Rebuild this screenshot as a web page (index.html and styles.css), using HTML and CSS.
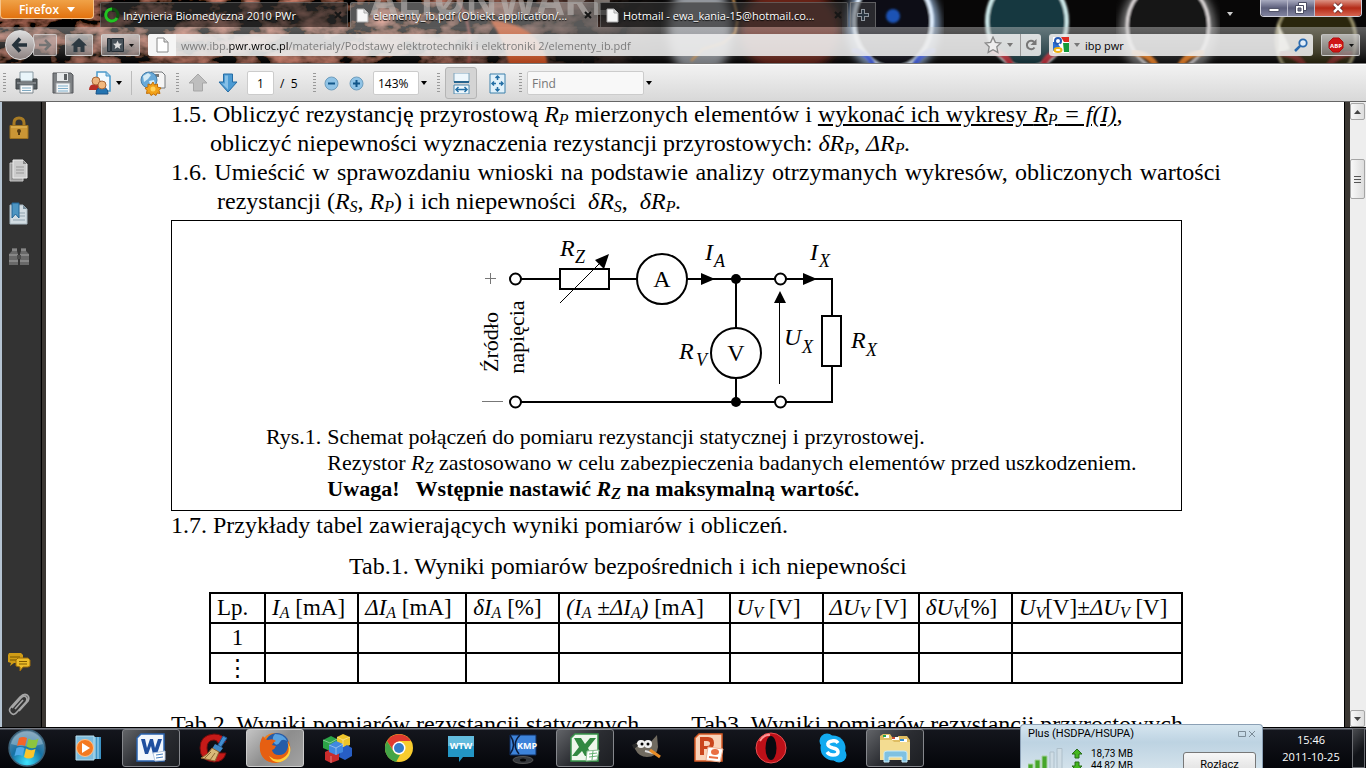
FILE: index.html
```html
<!DOCTYPE html>
<html lang="pl">
<head>
    <meta charset="UTF-8">
    <meta name="viewport" content="width=device-width, initial-scale=1.0">
    <title>elementy_ib.pdf (Obiekt application/pdf)</title>
    <link rel="stylesheet" href="styles.css">
</head>
<body>
    <header class="browser">
        <!-- Persona theme behind the tabs -->
        <svg class="theme" viewBox="0 0 1366 64" preserveAspectRatio="xMinYMin slice" aria-hidden="true">
            <defs>
                <filter id="rust" x="0" y="0" width="100%" height="100%">
                    <feTurbulence type="fractalNoise" baseFrequency="0.035 0.06" numOctaves="4" seed="8"/>
                    <feColorMatrix values="2 0 0 0 -0.85  0.7 0 0 0 -0.3  0.5 0 0 0 -0.22  0 0 0 0 1"/>
                </filter>
                <filter id="soft"><feGaussianBlur stdDeviation="5"/></filter>
                <filter id="glow"><feGaussianBlur stdDeviation="1.2"/></filter>
                <linearGradient id="rustFade"><stop offset="0.6" stop-color="#fff"/><stop offset="1" stop-color="#000"/></linearGradient>
                <mask id="rustMask"><rect width="660" height="64" fill="url(#rustFade)"/></mask>
            </defs>
            <rect width="1366" height="64" fill="#080707"/>
            <rect width="660" height="64" filter="url(#rust)" mask="url(#rustMask)"/>
            <path d="M455 -5q22 35 12 75" fill="none" stroke="#b9524c" stroke-width="2" filter="url(#glow)"/>
            <path d="M490 20q55 5 58 50h-38q-5-30-20-50z" fill="#d65324" filter="url(#glow)"/>
            <ellipse cx="700" cy="30" rx="32" ry="50" fill="#92969c" filter="url(#soft)"/>
            <ellipse cx="790" cy="30" rx="50" ry="45" fill="#682415" filter="url(#soft)"/>
            <path d="M733-2l5 20-3 15-12 10-20 6-12 12" fill="none" stroke="#e7a75b" stroke-width="2" filter="url(#glow)"/>
            <ellipse cx="893" cy="25" rx="42" ry="48" fill="#0a1326" stroke="#a9c8ee" stroke-width="7" filter="url(#soft)"/>
            <ellipse cx="893" cy="22" rx="39" ry="46" fill="#080b17" stroke="#e2f0ff" stroke-width="4" filter="url(#glow)"/>
            <circle cx="893" cy="16" r="7" fill="#1c53b5" filter="url(#glow)"/>
            <path d="M852 50q20 4 22 20M935 50q-18 4-22 20" fill="none" stroke="#4a68ef" stroke-width="5" filter="url(#glow)"/>
            <ellipse cx="1027" cy="22" rx="40" ry="46" fill="#123841" stroke="#d1edee" stroke-width="4" filter="url(#glow)"/>
            <path d="M990 50q20 4 22 20M1064 50q-20 4-22 20" fill="none" stroke="#c62f3b" stroke-width="6" filter="url(#glow)"/>
            <ellipse cx="1168" cy="30" rx="43" ry="48" fill="#14141b" stroke="#888" stroke-width="8" filter="url(#soft)"/>
            <ellipse cx="1168" cy="26" rx="41" ry="45" fill="#151519" stroke="#e1dcdc" stroke-width="3" filter="url(#glow)"/>
            <path d="M1132 52q20 2 26 18M1204 52q-20 2-26 18" fill="none" stroke="#f18327" stroke-width="6" filter="url(#glow)"/>
            <ellipse cx="1316" cy="40" rx="40" ry="44" fill="#2b280c" stroke="#9c946e" stroke-width="3" filter="url(#glow)"/>
            <path d="M1278 24q8 14 12 25l-12 5z" fill="#ede8cc" filter="url(#glow)"/>
            <path d="M1280 53q22 2 26 18M1352 53q-20 2-26 18" fill="none" stroke="#7f2b26" stroke-width="6" filter="url(#glow)"/>
            <text class="theme-logo" x="370" y="15">ALIØNWARE</text>
        </svg>

        <div class="tab-bar">
            <button class="firefox-button">Firefox
                <svg width="8" height="5" viewBox="0 0 8 5"><path d="M0 0h8L4 5z" fill="#fff"/></svg>
            </button>
            <div class="tabs">
                <div class="tab">
                    <svg width="16" height="16" viewBox="0 0 16 16"><circle cx="8" cy="8" r="6" fill="none" stroke="#114f11" stroke-width="3"/><path d="M8 2a6 6 0 1 0 5 9" fill="none" stroke="#22c522" stroke-width="3"/></svg>
                    <span class="tab-title">Inżynieria Biomedyczna 2010 PWr</span>
                    <button class="tab-close" aria-label="Zamknij kartę"><svg width="8" height="8" viewBox="0 0 8 8"><path d="M1 1l6 6M7 1L1 7"/></svg></button>
                </div>
                <div class="tab tab-active">
                    <svg width="16" height="16" viewBox="0 0 16 16"><path d="M3 2h7l4 4v9H3z" fill="#f6f6f6" stroke="#a9a9a9"/><path d="M10 2v4h4" fill="#ddd" stroke="#a9a9a9"/></svg>
                    <span class="tab-title">elementy_ib.pdf (Obiekt application/...</span>
                    <button class="tab-close" aria-label="Zamknij kartę"><svg width="8" height="8" viewBox="0 0 8 8"><path d="M1 1l6 6M7 1L1 7"/></svg></button>
                </div>
                <div class="tab">
                    <svg width="16" height="16" viewBox="0 0 16 16"><path d="M3 2h7l4 4v9H3z" fill="#f6f6f6" stroke="#a9a9a9"/><path d="M10 2v4h4" fill="#ddd" stroke="#a9a9a9"/></svg>
                    <span class="tab-title">Hotmail - ewa_kania-15@hotmail.co...</span>
                    <button class="tab-close" aria-label="Zamknij kartę"><svg width="8" height="8" viewBox="0 0 8 8"><path d="M1 1l6 6M7 1L1 7"/></svg></button>
                </div>
                <button class="new-tab" aria-label="Nowa karta"><svg width="12" height="12" viewBox="0 0 12 12"><path d="M6 0v12M0 6h12" stroke="#8e959d" stroke-width="4"/><path d="M6 1v10M1 6h10" stroke="#2b3641" stroke-width="2"/></svg></button>
            </div>
            <button class="tab-list" aria-label="Lista kart"><svg width="6" height="4" viewBox="0 0 6 4"><path d="M0 0h6L3 4z" fill="#ccc"/></svg></button>
            <div class="window-buttons">
                <button class="win-button" aria-label="Minimalizuj"><svg width="12" height="12" viewBox="0 0 12 12"><path d="M1 6.500h10v3H1z" fill="#fff" stroke="#54566b"/></svg></button>
                <button class="win-button" aria-label="Przywróć"><svg width="12" height="12" viewBox="0 0 12 12"><path d="M3.500 .5h8v8h-8z" fill="#fff" stroke="#4b4d63"/><path d="M.5 3.500h8v8h-8z" fill="#fff" stroke="#4b4d63"/><path d="M3 6h3v3H3z" fill="#75768b" stroke="#4b4d63"/></svg></button>
                <button class="win-button win-close" aria-label="Zamknij"><svg width="12" height="12" viewBox="0 0 12 12"><path d="M2 2l8 8M10 2l-8 8" stroke="#5b2020" stroke-width="4"/><path d="M2 2l8 8M10 2l-8 8" stroke="#fff" stroke-width="2.500"/></svg></button>
            </div>
        </div>

        <div class="nav-bar">
            <div class="history">
                <button class="back" aria-label="Wstecz"><svg width="18" height="18" viewBox="0 0 18 18"><path d="M9 2.500L3 9l6 6.500M3.500 9H16" fill="none" stroke="#26323b" stroke-width="3.500"/></svg></button>
                <button class="nav-button forward" aria-label="Dalej"><svg width="14" height="14" viewBox="0 0 14 14"><path d="M7 2l5 5-5 5M12 7H1" fill="none" stroke="#747474" stroke-width="2.500"/></svg></button>
            </div>
            <button class="nav-button home" aria-label="Strona startowa"><svg width="16" height="14" viewBox="0 0 16 14"><path d="M8 0l8 7.500h-2.500V14h-4V9h-3v5h-4V7.500H0z" fill="#2d3941"/></svg></button>
            <button class="nav-button bookmarks" aria-label="Zakładki">
                <svg width="17" height="14" viewBox="0 0 17 14"><path d="M.5 .5h3v13h-3zM4.500 .5h12v13h-12z" fill="#475159" stroke="#252e35"/><path d="M10.500 2.500l1.300 3 3.200.3-2.400 2.100.7 3.100-2.800-1.700L7.700 11l.7-3.100L6 5.800l3.200-.3z" fill="#ddd"/></svg>
                <svg width="5" height="3" viewBox="0 0 5 3"><path d="M0 0h5L2.500 3z" fill="#111"/></svg>
            </button>
            <div class="url-bar">
                <span class="identity"><svg width="13" height="16" viewBox="0 0 13 16"><path d="M1 1h7l4 4v10H1z" fill="#fff" stroke="#888"/><path d="M8 1v4h4" fill="#ddd" stroke="#888"/></svg></span>
                <input class="url-input" type="text" aria-label="Adres" value="www.ibp.pwr.wroc.pl/materialy/Podstawy elektrotechniki i elektroniki 2/elementy_ib.pdf">
                <svg width="18" height="18" viewBox="0 0 16 16"><path d="M8 1l2.100 4.600 4.900.6-3.600 3.400.9 5L8 12.200l-4.300 2.400.9-5L1 6.200l4.900-.6z" fill="#eee" stroke="#8a8a8a" stroke-width="1.200"/></svg>
                <svg class="url-arrow" width="6" height="4" viewBox="0 0 6 4"><path d="M0 0h6L3 4z" fill="#777"/></svg>
                <button class="reload" aria-label="Odśwież"><svg width="12" height="12" viewBox="0 0 12 12"><path d="M9.500 8.500A4.200 4.200 0 1 1 9 3" fill="none" stroke="#777" stroke-width="2"/><path d="M11.500 0v6h-6z" fill="#777"/></svg></button>
            </div>
            <div class="search-bar">
                <svg width="16" height="16" viewBox="0 0 16 16"><path d="M0 0h16v16H0z" fill="#fff"/><path d="M8 0h8v5h-5z" fill="#dd2c22"/><path d="M10 6h6v9h-5z" fill="#149a3a"/><path d="M0 5h5l3 4-8 5z" fill="#2c6fd4"/><circle cx="5" cy="4" r="3" fill="#fff" stroke="#2459b5" stroke-width="2"/><ellipse cx="5" cy="13" rx="3.500" ry="2" fill="#fff" stroke="#f1b213" stroke-width="2"/><path d="M6 7l3 3" stroke="#fff" stroke-width="2"/></svg>
                <svg width="6" height="4" viewBox="0 0 6 4"><path d="M0 0h6L3 4z" fill="#777"/></svg>
                <input class="search-input" type="text" aria-label="Szukaj" value="ibp pwr">
                <svg width="14" height="14" viewBox="0 0 14 14"><circle cx="9" cy="5" r="3.700" fill="#e2edf8" stroke="#2a6aae" stroke-width="1.800"/><path d="M6.200 7.800L1 13" stroke="#2a6aae" stroke-width="2.500"/></svg>
            </div>
            <button class="nav-button abp" aria-label="Adblock Plus">
                <svg width="16" height="16" viewBox="0 0 16 16"><path d="M5 1h6l4 4v6l-4 4H5l-4-4V5z" fill="#cf1616" stroke="#b30d0d"/><text class="abp-text" x="8" y="11">ABP</text></svg>
                <svg width="5" height="3" viewBox="0 0 5 3"><path d="M0 0h5L2.500 3z" fill="#111"/></svg>
            </button>
        </div>
    </header>

    <div class="pdf-toolbar">
        <span class="grip"></span>
        <button class="tool print" aria-label="Drukuj"><svg width="23" height="24" viewBox="0 0 23 24"><path d="M5 1h13v9H5z" fill="#e9f5fa" stroke="#8a9aa3"/><path d="M1 8h4v3h13V8h4v10H1z" fill="#555b5f" stroke="#3f4447"/><path d="M2 12h19" stroke="#a8adb0"/><path d="M5 14h13v8H5z" fill="#f8fafb" stroke="#7c868c"/><path d="M7 17h9M7 19.500h9" stroke="#7ea9c1"/></svg></button>
        <button class="tool save" aria-label="Zapisz"><svg width="22" height="22" viewBox="0 0 22 22"><path d="M1 1h18l2 2v18H1z" fill="#7d8083" stroke="#54575a"/><path d="M5 1h11v8H5z" fill="#e6e8e9"/><path d="M12 2h3v6h-3z" fill="#5a5d60"/><path d="M4 11h14v10H4z" fill="#f2f5f7" stroke="#9a9da0"/><path d="M6 14h10M6 16.500h10M6 19h10" stroke="#80afca"/></svg></button>
        <button class="tool share" aria-label="Współpraca">
            <svg width="24" height="24" viewBox="0 0 24 24"><path d="M9 1h9l4 4v15H9z" fill="#f2f9fd" stroke="#4a98c9" stroke-width="1.500"/><path d="M18 1v4h4" fill="#9ccbe8" stroke="#4a98c9"/><path d="M1 19q0-6 6-6t6 6z" fill="#b72f25"/><circle cx="8" cy="10" r="4" fill="#edb47c" stroke="#ab6634"/><path d="M8 23q0-7 6-7t6 7z" fill="#2474b1" stroke="#195387"/><circle cx="14" cy="14" r="4" fill="#f1b97f" stroke="#ab6634"/></svg>
            <svg width="6" height="4" viewBox="0 0 6 4"><path d="M0 0h6L3 4z" fill="#000"/></svg>
        </button>
        <span class="divider"></span>
        <button class="tool web" aria-label="Acrobat.com"><svg width="26" height="25" viewBox="0 0 26 25"><path d="M11 1h11l3 3v13H11z" fill="#f5f5f5" stroke="#75797c"/><path d="M13 3h6v3h-6z" fill="#777"/><circle cx="9" cy="9" r="8" fill="#69a9d8" stroke="#467fa9"/><path d="M3 5l5-3 3 2-3 4-4 3zM9 10l5-1 1 4-4 3z" fill="#d5ebf5"/><path d="M13 11l1.500 3 3-1v3l3.500 1-2 2.500 1 3-3-.5-1 2.500-2.500-1.500L11 24.500 9.500 22l-3 .5.500-3L5 17l3-1V13l3 1z" fill="#f2a118" stroke="#c1700b"/><circle cx="13" cy="18" r="2.500" fill="#ffd25c"/></svg></button>
        <span class="grip"></span>
        <button class="tool page-up" aria-label="Poprzednia strona"><svg width="20" height="20" viewBox="0 0 20 20"><path d="M10 1l9 9h-4.500v8h-9v-8H1z" fill="#bebebe" stroke="#a7a7a7"/></svg></button>
        <button class="tool page-down" aria-label="Następna strona"><svg width="20" height="20" viewBox="0 0 20 20"><path d="M5.500 1h9v8H19l-9 10L1 9h4.500z" fill="#4c9bd3" stroke="#256ca4"/><path d="M7 2.500h3v14L4 10.500h3z" fill="#86c0e7"/></svg></button>
        <input class="field page-field" type="text" aria-label="Strona" value="1">
        <span class="page-count">/&nbsp; 5</span>
        <span class="grip"></span>
        <button class="tool zoom-out" aria-label="Pomniejsz"><svg width="15" height="15" viewBox="0 0 15 15"><circle cx="7.500" cy="7.500" r="6.500" fill="#8fc3e6" stroke="#6e9dbd"/><path d="M4 7.500h7" stroke="#115689" stroke-width="2"/></svg></button>
        <button class="tool zoom-in" aria-label="Powiększ"><svg width="15" height="15" viewBox="0 0 15 15"><circle cx="7.500" cy="7.500" r="6.500" fill="#8fc3e6" stroke="#6e9dbd"/><path d="M4 7.500h7M7.500 4v7" stroke="#115689" stroke-width="2"/></svg></button>
        <input class="field zoom-field" type="text" aria-label="Powiększenie" value="143%">
        <button class="tool drop" aria-label="Lista powiększeń"><svg width="6" height="4" viewBox="0 0 6 4"><path d="M0 0h6L3 4z" fill="#000"/></svg></button>
        <span class="grip"></span>
        <button class="tool fit-width" aria-label="Dopasuj szerokość"><svg width="17" height="21" viewBox="0 0 17 21"><path d="M1 0h15v9H1z" fill="#eef7fc" stroke="#7fa4bb"/><path d="M1 8h15v2H1z" fill="#26648e"/><path d="M1 12h15v9H1z" fill="#eef7fc" stroke="#4e89ae"/><path d="M3 16.500h11M5.500 14L3 16.500 5.500 19M11.500 14l2.500 2.500-2.500 2.500" fill="none" stroke="#246fa5" stroke-width="1.500"/></svg></button>
        <button class="tool fit-page" aria-label="Dopasuj stronę"><svg width="17" height="21" viewBox="0 0 17 21"><path d="M1 1h15v19H1z" fill="#e1f1fa" stroke="#3c80ab"/><path d="M8.500 3v4M6.500 5l2-2 2 2M8.500 14v4M6.500 16l2 2 2-2M3 10.500h4M5 8.500l-2 2 2 2M10 10.500h4M12 8.500l2 2-2 2" fill="none" stroke="#246fa5" stroke-width="1.500"/></svg></button>
        <span class="grip"></span>
        <input class="field find-field" type="text" aria-label="Find" placeholder="Find">
        <button class="tool drop" aria-label="Opcje szukania"><svg width="6" height="4" viewBox="0 0 6 4"><path d="M0 0h6L3 4z" fill="#000"/></svg></button>
    </div>

    <main class="viewer">
        <nav class="side-panel">
            <button class="side-button" aria-label="Zabezpieczenia"><svg width="22" height="24" viewBox="0 0 22 24"><path d="M6 11V7q0-5 5-5t5 5v4" fill="none" stroke="#a87b24" stroke-width="3"/><path d="M2 9.500h18v13H2z" fill="#ca9635" stroke="#9b701f"/><path d="M3 11h16" stroke="#e5bd61"/><circle cx="11" cy="15" r="2" fill="#553b11"/><path d="M10 15h2v4h-2z" fill="#553b11"/></svg></button>
            <button class="side-button" aria-label="Strony"><svg width="22" height="24" viewBox="0 0 22 24"><path d="M2 4h13v18H2z" fill="#9a9a9a" stroke="#c9c9c9"/><path d="M5 1h10l4 4v14H5z" fill="#ccc" stroke="#eee"/><path d="M15 1v4h4" fill="#888"/><path d="M8 8h8M8 11h8M8 14h8" stroke="#999"/></svg></button>
            <button class="side-button" aria-label="Zakładki"><svg width="22" height="24" viewBox="0 0 22 24"><path d="M2 3h13l4 4v15H2z" fill="#d2dce2" stroke="#a9b8c1"/><path d="M15 3v4h4" fill="#758b99"/><path d="M11 11h6M11 14h6M5 18h12" stroke="#91a3af"/><path d="M4 1h7v15l-3.500-4L4 16z" fill="#4d95c2" stroke="#226596"/></svg></button>
            <button class="side-button" aria-label="Szukaj"><svg width="22" height="20" viewBox="0 0 22 20"><path d="M4 1h5v3l1 3v11H1V7l3-3zM13 1h5v3l3 3v11h-9V7l1-3z" fill="#696969"/><path d="M4 3h5M13 3h5M1 8h9M12 8h9M1 14h9M12 14h9" stroke="#919191" stroke-width="1.500"/><path d="M9 8h4v4H9z" fill="#4c4c4c"/></svg></button>
            <button class="side-button side-bottom" aria-label="Komentarze"><svg width="24" height="20" viewBox="0 0 24 20"><path d="M2 1h12l2 2v7l-2 1H7l-4 3 1-3-3-1V3z" fill="#cf9c16"/><path d="M3 5h10M3 8h6" stroke="#745500"/><path d="M11 6h10l2 2v6l-2 1h-5l-3 4v-4l-4-1V8z" fill="#edbd2a" stroke="#9d6d0b"/><path d="M12 9.500h8M12 12h8" stroke="#805b00"/></svg></button>
            <button class="side-button" aria-label="Załączniki"><svg width="22" height="24" viewBox="0 0 22 24"><path d="M4 15L13 5q3-3 5-1t0 5L9 19q-3 4-6 1t0-6L12 4q4-4 7-2t1 6l-9 10M7 16l8-9" fill="none" stroke="#a5a5a5" stroke-width="1.700"/></svg></button>
        </nav>

        <article class="sheet">
            <p class="item">1.5. Obliczyć rezystancję przyrostową <i>R<sub>P</sub></i> mierzonych elementów i <u>wykonać ich wykresy <i>R<sub>P</sub> = f(I)</i></u><i>,</i></p>
            <p class="item item-inner">obliczyć niepewności wyznaczenia rezystancji przyrostowych: <i>δR<sub>P</sub></i>, <i>ΔR<sub>P</sub>.</i></p>
            <p class="item item-wide">1.6. Umieścić w sprawozdaniu wnioski na podstawie analizy otrzymanych wykresów, obliczonych wartości rezystancji (<i>R<sub>S</sub></i>, <i>R<sub>P</sub></i>) i ich niepewności &nbsp;<i>δR<sub>S</sub></i>, &nbsp;<i>δR<sub>P</sub>.</i></p>

            <figure class="scheme">
                <svg class="circuit" width="430" height="184" viewBox="470 230 430 184" role="img" aria-label="Schemat połączeń">
                    <g class="wire">
                        <path d="M521 279h39M609 279h28M687 279h88M786 279h46v37M832 366v36h-46M775 402H521M736 279v49M736 378v24"/>
                        <path d="M560 269h49v20h-49zM822 316h19v50h-19z"/>
                        <circle cx="662" cy="279" r="25"/>
                        <circle cx="736" cy="353" r="25"/>
                        <circle cx="515.500" cy="279" r="5.500"/>
                        <circle cx="515.500" cy="402" r="5.500"/>
                        <circle cx="780.500" cy="279" r="5.500"/>
                        <circle cx="780.500" cy="402" r="5.500"/>
                    </g>
                    <path class="thin" d="M560 303l42-42M779.500 384v-84"/>
                    <path d="M609 254l-5 15-9-9zM701 273v12l14-6zM803 273v12l14-6zM774 303h12l-6-12z"/>
                    <circle cx="736" cy="279" r="5"/>
                    <circle cx="736" cy="402" r="5"/>
                    <path class="faint" d="M485 278.500h11M490.500 273v11M482 401.500h21"/>
                    <g class="symbol">
                        <text x="560" y="256">R</text><text class="index" x="575" y="263">Z</text>
                        <text x="705" y="260">I</text><text class="index" x="714" y="267">A</text>
                        <text x="810" y="260">I</text><text class="index" x="819" y="267">X</text>
                        <text x="679" y="359">R</text><text class="index" x="696" y="366">V</text>
                        <text x="784" y="345">U</text><text class="index" x="802" y="353">X</text>
                        <text x="851" y="348">R</text><text class="index" x="866" y="356">X</text>
                    </g>
                    <text class="meter" x="662" y="287">A</text>
                    <text class="meter" x="736" y="361">V</text>
                    <text class="source" transform="rotate(-90 498 342)" x="498" y="342">Źródło</text>
                    <text class="source" transform="rotate(-90 524 337)" x="524" y="337">napięcia</text>
                </svg>
                <figcaption class="legend">
                    <span class="legend-label">Rys.1.</span>
                    <div class="legend-text">
                        <p>Schemat połączeń do pomiaru rezystancji statycznej i przyrostowej.</p>
                        <p>Rezystor <i>R<sub>Z</sub></i> zastosowano w celu zabezpieczenia badanych elementów przed uszkodzeniem.</p>
                        <p><b>Uwaga! &nbsp; Wstępnie nastawić <i>R<sub>Z</sub></i> na maksymalną wartość.</b></p>
                    </div>
                </figcaption>
            </figure>

            <p class="item">1.7. Przykłady tabel zawierających wyniki pomiarów i obliczeń.</p>
            <table class="results">
                <caption>Tab.1. Wyniki pomiarów bezpośrednich i ich niepewności</caption>
                <colgroup><col class="c-no"><col class="c-mid"><col class="c-wide"><col class="c-mid"><col class="c-sum"><col class="c-mid"><col class="c-big"><col class="c-mid"><col class="c-sum"></colgroup>
                <thead>
                    <tr>
                        <th>Lp.</th>
                        <th><i>I<sub>A</sub></i> [mA]</th>
                        <th><i>ΔI<sub>A</sub></i> [mA]</th>
                        <th><i>δI<sub>A</sub></i> [%]</th>
                        <th><i>(I<sub>A</sub></i> ±<i>ΔI<sub>A</sub>)</i> [mA]</th>
                        <th><i>U<sub>V</sub></i> [V]</th>
                        <th><i>ΔU<sub>V</sub></i> [V]</th>
                        <th><i>δU<sub>V</sub></i>[%]</th>
                        <th><i>U<sub>V</sub></i>[V]±<i>ΔU<sub>V</sub></i> [V]</th>
                    </tr>
                </thead>
                <tbody>
                    <tr><td>1</td><td></td><td></td><td></td><td></td><td></td><td></td><td></td><td></td></tr>
                    <tr><td>⋮</td><td></td><td></td><td></td><td></td><td></td><td></td><td></td><td></td></tr>
                </tbody>
            </table>
            <div class="next-tables">
                <p class="item">Tab.2. Wyniki pomiarów rezystancji statycznych</p>
                <p class="item">Tab3. Wyniki pomiarów rezystancji przyrostowych</p>
            </div>
        </article>

        <div class="scrollbar">
            <button class="scroll-button" aria-label="W górę"><svg width="7" height="4" viewBox="0 0 7 4"><path d="M0 4h7L3.500 0z" fill="#444"/></svg></button>
            <div class="scroll-track"><div class="scroll-thumb"><svg width="7" height="7" viewBox="0 0 7 7"><path d="M0 .5h7M0 3.500h7M0 6.500h7" stroke="#555"/></svg></div></div>
            <button class="scroll-button" aria-label="W dół"><svg width="7" height="4" viewBox="0 0 7 4"><path d="M0 0h7L3.500 4z" fill="#444"/></svg></button>
        </div>
    </main>

    <footer class="taskbar">
        <button class="start" aria-label="Start"><svg width="38" height="38" viewBox="0 0 38 38">
            <defs><radialGradient id="orb" cx=".5" cy=".9" r=".9"><stop offset="0" stop-color="#3fe4ff"/><stop offset=".5" stop-color="#1671a4"/><stop offset="1" stop-color="#6f8fa6"/></radialGradient></defs>
            <circle cx="19" cy="19" r="18" fill="url(#orb)" stroke="#3c6178" stroke-width="1.500"/>
            <path d="M3 15a16.500 16.500 0 0 1 32 0q-16 5-32 0z" fill="#d5e6ee" opacity=".35"/>
            <path d="M11 9q4-2 8 0l-2 8q-4-2-8 0z" fill="#f2652a"/><path d="M20.500 9.500q5 3 10 0l-2.500 9q-5 2-9.500-1z" fill="#8cc53e"/><path d="M8.500 19q4-2 8 0l-2 8q-4-2-8 0z" fill="#4fa9e8"/><path d="M18 19.500q5 3 9.500.5l-2 8q-5 3-9.500 0z" fill="#fcc52c"/>
        </svg></button>
        <div class="apps">
            <button class="app" aria-label="Windows Media Player"><svg width="30" height="30" viewBox="0 0 30 30"><path d="M8 4h19v22H8z" fill="#3d93c5"/><path d="M24 4v22M21 4v22" stroke="#b7e1f4"/><path d="M2 3h18v24H2z" fill="#7ebcdd" stroke="#b9dfef"/><circle cx="11" cy="15" r="8.500" fill="#f47920" stroke="#ffc28c"/><path d="M8 10l8 5-8 5z" fill="#fff"/></svg></button>
            <button class="app app-open" aria-label="Word"><svg width="30" height="30" viewBox="0 0 30 30"><path d="M5 1h23v27H1V5z" fill="#f2f7fd" stroke="#2a63ae" stroke-width="1.500"/><path d="M5 6h4l2 9 3-9h3l2 9 3-9h4l-5 15h-4l-2-8-3 8H9z" fill="#1f4f9f"/><path d="M17 20l12-2v9l-10 1z" fill="#fff" stroke="#b6c7de"/><path d="M20 22l7-1M20 25l7-1" stroke="#447dbd"/></svg></button>
            <button class="app" aria-label="CCleaner"><svg width="32" height="32" viewBox="0 0 32 32"><path d="M29 10q-2-8-12-8Q3 3 3 16t14 14q10 0 12-9h-8q-1 3-5 3-6 0-6-8t7-8q3 0 4 3z" fill="#c51a18" stroke="#700b0b"/><path d="M21 13l5-9 4 2-6 9z" fill="#428ed0" stroke="#1e5590"/><path d="M18 12l8 4-3 4-8-3z" fill="#4089c6"/><path d="M15 16l7 4-4 9-14-3q7-3 11-10z" fill="#d9b878" stroke="#8f6735"/><path d="M14 20l-6 6M18 21l-5 7" stroke="#8f6735"/></svg></button>
            <button class="app app-current" aria-label="Firefox"><svg width="34" height="34" viewBox="0 0 34 34"><circle cx="17" cy="17" r="15" fill="#ef7e18"/><circle cx="19" cy="14" r="12" fill="#265ca8"/><path d="M17 3q9 0 12 7-5-3-7 1-3 5-6 1-3-5 1-9z" fill="#58a1df"/><path d="M5 5q2 4 5 4 5-2 8 1-3 1-4 4l4 1q-1 3-4 4 1 5 7 5t8-5q2-4 1-9 3 4 2 9-2 12-15 13Q4 31 2 19 1 11 5 5z" fill="#e65f12"/><path d="M29 10q5 12-4 17-7 4-14-2 5 9 14 5 9-5 7-14z" fill="#ffd03e"/></svg></button>
            <button class="app" aria-label="Kostki"><svg width="32" height="32" viewBox="0 0 32 32"><path d="M2 8l8-4 6 3v8l-7 4-7-3z" fill="#2ca447"/><path d="M16 5l6-3 7 3v8l-7 3-6-3z" fill="#efc52a"/><path d="M19 17l7-4 5 3v8l-7 4-6-3z" fill="#275ec5"/><path d="M4 20l6-3 8 3v8l-8 3-6-3z" fill="#ca2c2c"/><path d="M8 13l7-4 7 3v8l-7 3-7-3z" fill="#4189e0"/><path d="M8 13l7 3 7-4M15 16v7M10 24v7M2 8l7 3 7-4M22 8v7M16 5l6 3 7-3" fill="none" stroke="#fff" opacity=".4"/></svg></button>
            <button class="app" aria-label="Chrome"><svg width="30" height="30" viewBox="0 0 30 30"><circle cx="15" cy="15" r="14" fill="#f9cc2e"/><path d="M3 8A14 14 0 0 1 27 8H15l-6 9z" fill="#df3a2e"/><path d="M3 8l7 11q2 3 6 3l-4 7A14 14 0 0 1 3 8z" fill="#44a447"/><circle cx="15" cy="15" r="6.500" fill="#fff"/><circle cx="15" cy="15" r="5" fill="#367cc8"/></svg></button>
            <button class="app" aria-label="WTW"><svg width="30" height="30" viewBox="0 0 30 30"><path d="M2 3h26v21H17l-4 5v-5H2z" fill="#2396c5"/><path d="M2 3h26v10H2z" fill="#62bbdd"/><text class="icon-text" x="15" y="16">WTW</text></svg></button>
            <button class="app" aria-label="KMPlayer"><svg width="30" height="32" viewBox="0 0 30 32"><ellipse cx="15" cy="28" rx="10" ry="3.500" fill="#34373c" stroke="#555"/><ellipse cx="15" cy="28" rx="3" ry="1.500" fill="#050505"/><path d="M2 3h26v20H2z" fill="#3d83da" stroke="#102e60"/><path d="M2 3q7 10 0 19M12 3q-9 9-1 19" fill="none" stroke="#0b1c3d" stroke-width="1.500"/><text class="icon-text" x="19" y="17">KMP</text></svg></button>
            <button class="app app-open" aria-label="Excel"><svg width="30" height="30" viewBox="0 0 30 30"><path d="M5 1h23v27H1V5z" fill="#eef7ec" stroke="#37954a" stroke-width="1.500"/><path d="M4 5h7l4 6 5-6h6L18 15l4 8h-7l-3-5-5 5H2l7-9z" fill="#318941"/><path d="M17 18l12-1-2 10-11 1z" fill="#fff" stroke="#86bb8e"/><path d="M19 21l8-1M19 24l8-1M23 18l-1 9" stroke="#65b173"/></svg></button>
            <button class="app" aria-label="GIMP"><svg width="32" height="26" viewBox="0 0 32 26"><path d="M4 9l6-4q4 0 8 4l8-9 1 12q-1 10-11 10-8 0-12-8z" fill="#716b60"/><circle cx="10" cy="9" r="4" fill="#eee"/><circle cx="17" cy="9" r="4" fill="#eee"/><circle cx="11" cy="9" r="1.500"/><circle cx="17" cy="9" r="1.500"/><path d="M1 10q5-3 6 1l-4 3z" fill="#282828"/><path d="M14 16l8 2" stroke="#ddd" stroke-width="2"/><path d="M19 15l10 7" stroke="#e98c26" stroke-width="3"/></svg></button>
            <button class="app" aria-label="PowerPoint"><svg width="30" height="30" viewBox="0 0 30 30"><path d="M5 1h23v27H1V5z" fill="#f9d3b9" stroke="#d75a24" stroke-width="1.500"/><path d="M6 4h8q6 0 6 6t-6 6h-4v6H6zM10 8v5h3q3 0 3-2.500T13 8z" fill="#ca451c" fill-rule="evenodd"/><path d="M14 14l15 2-3 13-14-2z" fill="#fff" stroke="#efb395"/><ellipse cx="21" cy="19" rx="4" ry="3" fill="#e96e42"/><path d="M15 24l9 1" stroke="#e96e42" stroke-width="2"/></svg></button>
            <button class="app" aria-label="Opera"><svg width="32" height="32" viewBox="0 0 32 32"><ellipse cx="16" cy="16" rx="15" ry="15" fill="#bd1018" stroke="#e94e50"/><ellipse cx="16" cy="16" rx="5.500" ry="12" fill="#090a10"/><path d="M5 9q4-7 10-6" fill="none" stroke="#ff9392" stroke-width="2"/></svg></button>
            <button class="app" aria-label="Skype"><svg width="30" height="30" viewBox="0 0 30 30"><circle cx="9" cy="8" r="7.500" fill="#12aaf0"/><circle cx="21" cy="22" r="7.500" fill="#12aaf0"/><circle cx="15" cy="15" r="12.500" fill="#12aaf0"/><path d="M20 10q-2-3-6-2-5 1-4 4 1 2 5 3 5 1 5 4 0 3-5 3-4 0-6-3" fill="none" stroke="#fff" stroke-width="3.500"/></svg></button>
            <button class="app app-open" aria-label="Eksplorator"><svg width="32" height="30" viewBox="0 0 32 30"><path d="M1 3l3-2h7l2 3h6v-1h9l3 4v20H1z" fill="#dfbd62"/><path d="M5 2h5v3H5zM13 4h7v3h-7zM21 6h7v3h-7z" fill="#fff"/><path d="M4 2h3v2H4z" fill="#25a44d"/><path d="M13 4h3v2h-3z" fill="#ca4c32"/><path d="M21 6h4v2h-4z" fill="#368fd2"/><path d="M1 7h12l2 2h16v18H1z" fill="#f3dc91"/><path d="M5 29V20q0-2 3-2h17q3 0 3 2v9h-5v-5H10v5z" fill="#7fc1e1" stroke="#c8ebf8"/></svg></button>
        </div>
        <div class="clock"><span>15:46</span><span>2011-10-25</span></div>
        <button class="show-desktop" aria-label="Pokaż pulpit"></button>

        <section class="modem">
            <div class="modem-head">
                <span>Plus (HSDPA/HSUPA)</span>
                <svg width="18" height="8" viewBox="0 0 18 8"><path d="M.5 1.500h7v5h-7zM11 1l6 6M17 1l-6 6" fill="none" stroke="#7b8b96"/></svg>
            </div>
            <div class="modem-body">
                <svg width="36" height="40" viewBox="0 0 36 40"><path d="M0 16h5v24H0zM7 12h5v28H7zM14 8h5v32h-5z" fill="#46a62a" stroke="#a7cf9e"/><path d="M22 4h4v36h-4zM29 .5h5V40h-5z" fill="#cfdde5" stroke="#aebfca"/></svg>
                <div class="traffic">
                    <p><svg width="10" height="10" viewBox="0 0 10 10"><path d="M5 0l5 5H7v4H3V5H0z" fill="#45b71f" stroke="#276d16"/></svg>18,73 MB</p>
                    <p><svg width="10" height="10" viewBox="0 0 10 10"><path d="M5 10l5-5H7V1H3v4H0z" fill="#45b71f" stroke="#276d16"/></svg>44,82 MB</p>
                </div>
                <button class="disconnect">Rozłącz</button>
            </div>
        </section>
    </footer>
</body>
</html>
```

FILE: styles.css
```css
* {
    box-sizing: border-box;
}

body {
    display: flex;
    flex-direction: column;
    height: 100vh;
    margin: 0;
    overflow: hidden;
    background-color: #fff;
    font-family: "Open Sans", "Noto Sans", sans-serif;
    font-size: 12px;
    color: #000;
}

p, figure {
    margin: 0;
}

svg {
    display: block;
    flex: none;
}

button {
    display: flex;
    align-items: center;
    justify-content: center;
    flex: none;
    padding: 0;
    border: none;
    background: none;
    font-family: inherit;
    font-size: 12px;
}

input {
    min-width: 0;
    padding: 0;
    border: none;
    background: none;
    font-family: inherit;
    font-size: 12px;
}

/* Browser window */
.browser {
    position: relative;
    flex: none;
    height: 64px;
    overflow: hidden;
    border-bottom: 1px solid #777;
}

.theme {
    position: absolute;
    top: 0;
    left: 0;
    width: 100%;
    height: 100%;
}

.theme-logo {
    font-size: 40px;
    font-weight: bold;
    fill: #b9b2ad;
    opacity: 0.6;
}

.tab-bar {
    position: relative;
    display: flex;
    align-items: flex-start;
    height: 27px;
}

.firefox-button {
    gap: 8px;
    width: 94px;
    height: 19px;
    margin-right: 6px;
    border: 1px solid #f5c38a;
    border-top: none;
    border-radius: 0 0 4px 4px;
    background: linear-gradient(#f0a247, #e2720f);
    color: #fff;
    font-weight: 600;
}

.tabs {
    display: flex;
    flex: 1;
    gap: 2px;
    padding-top: 2px;
    min-width: 0;
}

.tab {
    display: flex;
    align-items: center;
    gap: 3px;
    width: 248px;
    height: 25px;
    padding: 0 5px 0 3px;
    border: 1px solid rgba(150, 150, 150, 0.4);
    border-bottom: none;
    border-radius: 2px 2px 0 0;
    background-color: rgba(50, 50, 50, 0.65);
    color: #fff;
}

.tab-active {
    background-color: rgba(190, 190, 190, 0.45);
}

.tab-title {
    flex: 1;
    overflow: hidden;
    font-size: 11px;
    white-space: nowrap;
    text-shadow: 0 1px 1px #000;
}

.tab-close path {
    fill: none;
    stroke: #161616;
    stroke-width: 2;
}

.new-tab {
    width: 26px;
    height: 25px;
    border: 1px solid rgba(150, 150, 150, 0.5);
    border-bottom: none;
    background-color: rgba(70, 70, 70, 0.5);
}

.tab-list {
    width: 10px;
    height: 27px;
    margin-right: 25px;
}

.window-buttons {
    display: flex;
    margin-right: 4px;
    border: 1px solid #d0d0dc;
    border-top: none;
    border-radius: 0 0 4px 4px;
    overflow: hidden;
}

.win-button {
    width: 27px;
    height: 16px;
    border-right: 1px solid #b8b8c9;
    background: linear-gradient(#a9abc0, #5c5e7b 50%, #8284a0);
}

.win-close {
    width: 46px;
    border-right: none;
    background: linear-gradient(#dd9384, #b42a17 50%, #d76551);
}

.nav-bar {
    position: relative;
    display: flex;
    align-items: center;
    gap: 8px;
    height: 36px;
    padding: 0 6px 0 5px;
    background: linear-gradient(rgba(200, 200, 200, 0.45), rgba(130, 130, 130, 0.25) 70%, rgba(0, 0, 0, 0.2));
}

.history {
    display: flex;
    align-items: center;
}

.back {
    position: relative;
    width: 30px;
    height: 30px;
    border: 1px solid #ddd;
    border-radius: 50%;
    background: linear-gradient(#ddd, #8e8382);
}

.nav-button {
    height: 22px;
    border: 1px solid rgba(230, 230, 230, 0.6);
    border-radius: 2px;
    background: linear-gradient(rgba(210, 210, 210, 0.75), rgba(145, 140, 140, 0.7));
}

.forward {
    width: 24px;
    margin-left: -2px;
    background: rgba(185, 175, 175, 0.55);
}

.home {
    width: 28px;
}

.bookmarks,
.abp {
    gap: 5px;
    width: 39px;
}

.abp-text,
.icon-text {
    font-size: 6px;
    font-weight: bold;
    fill: #fff;
    text-anchor: middle;
}

.icon-text {
    font-size: 9px;
}

.url-bar,
.search-bar {
    display: flex;
    align-items: center;
    height: 22px;
    border-radius: 3px;
    background-color: rgba(240, 240, 240, 0.87);
}

.url-bar {
    flex: 1;
    min-width: 0;
}

.identity {
    display: flex;
    align-items: center;
    justify-content: center;
    width: 28px;
    height: 22px;
    border-radius: 3px 0 0 3px;
    background-color: #f5f5f5;
}

/* Only the domain part of the address is dark */
.url-input {
    flex: 1;
    margin-left: 5px;
    background: linear-gradient(90deg, #777 47px, #000 47px, #000 107px, #777 107px);
    -webkit-background-clip: text;
    background-clip: text;
    color: transparent;
    font-size: 11px;
}

.url-arrow {
    margin: 0 7px 0 5px;
}

.reload {
    width: 21px;
    height: 22px;
    border-left: 1px solid #999;
}

.search-bar {
    gap: 5px;
    width: 264px;
    padding: 0 5px 0 4px;
}

.search-input {
    flex: 1;
    font-size: 11px;
}

/* Reader toolbar */
.pdf-toolbar {
    display: flex;
    align-items: center;
    flex: none;
    height: 38px;
    padding: 0 4px 0 3px;
    border-top: 1px solid #fff;
    border-bottom: 1px solid #666;
    background: linear-gradient(#f2f2f2, #d8d8d8);
}

.grip {
    width: 3px;
    height: 22px;
    background: radial-gradient(circle, #999 1px, transparent 1px) 0 0 / 2px 3px;
}

.divider {
    width: 1px;
    height: 24px;
    margin: 0 8px 0 9px;
    background-color: #bbb;
}

.tool {
    height: 32px;
}

.print {
    margin-left: 9px;
}

.save {
    margin: 0 14px;
}

.share {
    gap: 4px;
}

.web {
    margin-right: 10px;
}

.page-up {
    margin: 0 10px 0 9px;
}

.page-down {
    margin-right: 9px;
}

.field {
    height: 24px;
    border: 1px solid #ccc;
    border-radius: 2px;
    background-color: #fff;
}

.page-field {
    width: 27px;
    text-align: center;
}

.page-count {
    width: 33px;
    margin-left: 6px;
}

.zoom-out {
    margin: 0 10px 0 8px;
}

.zoom-in {
    margin-right: 9px;
}

.zoom-field {
    width: 46px;
    padding-left: 4px;
}

.drop {
    width: 10px;
}

.drop + .grip {
    margin-left: 8px;
}

.fit-width {
    width: 32px;
    margin: 0 12px 0 5px;
    border: 1px solid #b5b5b5;
    border-radius: 3px;
    background-color: #d4d4d4;
}

.fit-page {
    margin-right: 13px;
}

.find-field {
    width: 117px;
    margin-left: 5px;
    padding-left: 4px;
    background-color: #f8f8f8;
}

.find-field::placeholder {
    color: #777;
}

/* Document area */
.viewer {
    display: flex;
    flex: 1;
    min-height: 0;
    overflow: hidden;
}

.side-panel {
    display: flex;
    flex-direction: column;
    align-items: center;
    flex: none;
    gap: 19px;
    width: 46px;
    padding: 14px 6px 10px 0;
    border-left: 2px solid #b5c4d2;
    border-right: 4px solid #3b3733;
    background: linear-gradient(90deg, #333 38px, #555 38px, #000 39px);
}

.side-button {
    height: 24px;
}

.side-bottom {
    margin-top: auto;
}

.sheet {
    flex: 1;
    min-width: 0;
    margin-top: -2px;
    padding: 0 123px 0 125px;
    border-right: 1px solid #000;
    font-family: "Liberation Serif", "Times New Roman", serif;
    font-size: 24px;
    line-height: 29px;
}

sub {
    font-size: 16px;
    line-height: 0;
    vertical-align: -3px;
}

.item {
    white-space: nowrap;
}

.item-inner {
    padding-left: 39px;
}

.item-wide {
    padding-left: 46px;
    text-align: justify;
    text-indent: -46px;
    white-space: normal;
}

.scheme {
    margin: 4px 39px 0 0;
    padding: 9px 0 8px;
    border: 1px solid #000;
}

.circuit {
    margin-left: 298px;
}

.wire {
    fill: #fff;
    stroke: #000;
    stroke-width: 2;
}

.thin {
    stroke: #000;
}

.faint {
    stroke: #777;
}

.symbol {
    font-style: italic;
}

.index {
    font-size: 18px;
}

.meter,
.source {
    text-anchor: middle;
}

.source {
    font-size: 22px;
}

.legend {
    display: flex;
    gap: 6px;
    padding: 10px 0 0 94px;
    font-size: 22px;
    line-height: 26px;
    white-space: nowrap;
}

.results {
    width: 974px;
    margin-left: 38px;
    border-collapse: collapse;
    table-layout: fixed;
}

.results caption {
    padding: 12px 0 11px 140px;
    text-align: left;
}

.results th,
.results td {
    height: 30px;
    padding: 0 0 0 6px;
    border: 2px solid #000;
    font-size: 23px;
    font-weight: normal;
    line-height: 28px;
    text-align: left;
    white-space: nowrap;
}

.results td {
    padding: 0;
    text-align: center;
}

.c-no {
    width: 55px;
}

.c-mid {
    width: 93px;
}

.c-wide {
    width: 108px;
}

.c-big {
    width: 96px;
}

.c-sum {
    width: 170px;
}

.next-tables {
    display: flex;
    gap: 52px;
    padding-top: 26px;
}

.scrollbar {
    display: flex;
    flex-direction: column;
    flex: none;
    width: 21px;
    padding: 1px 1px 0 0;
    border-left: 5px solid #3b3733;
    background-color: #eee;
}

.scroll-button,
.scroll-thumb {
    width: 15px;
    border: 1px solid #a5a5a5;
    border-radius: 2px;
    background: linear-gradient(90deg, #f8f8f8, #ddd);
}

.scroll-button {
    height: 17px;
}

.scroll-track {
    flex: 1;
    padding-top: 39px;
}

.scroll-thumb {
    display: flex;
    align-items: center;
    justify-content: center;
    height: 40px;
}

/* Taskbar */
.taskbar {
    position: relative;
    display: flex;
    flex: none;
    height: 41px;
    border-top: 1px solid #000;
    background: linear-gradient(#777b84 1px, #14161d 2px, #04050a);
}

.start {
    width: 60px;
    padding-right: 6px;
}

.apps {
    display: flex;
    flex: 1;
    gap: 4px;
    padding-top: 1px;
}

.app {
    width: 58px;
    height: 38px;
    border: 1px solid transparent;
    border-radius: 3px;
}

.app-open {
    border-color: #85878c;
    background: linear-gradient(135deg, #626468, #2b2d32 50%, #1c1e22);
}

.app-current {
    border-color: #ccc;
    background: linear-gradient(135deg, #c4c4c4, #8d8d8d 50%, #a3a3a3);
}

.clock {
    display: flex;
    flex-direction: column;
    justify-content: center;
    width: 82px;
    color: #fff;
    font-size: 11px;
    line-height: 17px;
    text-align: center;
}

.show-desktop {
    width: 13px;
    margin-right: 1px;
    border: 1px solid #6b6d72;
    background: linear-gradient(135deg, #4a4c50, #111318 60%);
}

/* Modem window on top of the taskbar */
.modem {
    position: absolute;
    right: 103px;
    bottom: 0;
    width: 243px;
    height: 44px;
    overflow: hidden;
    padding: 2px 6px 0 7px;
    border: 1px solid #8ba0b5;
    border-bottom: none;
    border-radius: 4px 4px 0 0;
    background: linear-gradient(#d5e5ef, #bdd3e2 40%, #d3e2eb);
    font-family: Roboto, sans-serif;
    font-size: 11px;
}

.modem-head {
    display: flex;
    align-items: center;
    justify-content: space-between;
    line-height: 13px;
}

.modem-body {
    display: flex;
    align-items: flex-start;
    padding-top: 8px;
}

.traffic {
    flex: 1;
    margin-left: 8px;
    font-size: 10px;
    line-height: 12px;
}

.traffic p {
    display: flex;
    align-items: center;
    gap: 9px;
}

.disconnect {
    width: 73px;
    height: 24px;
    margin-top: 4px;
    border: 1px solid #777;
    border-radius: 3px;
    background: linear-gradient(#f7f7f7, #ddd);
    font-size: 11px;
}
```
